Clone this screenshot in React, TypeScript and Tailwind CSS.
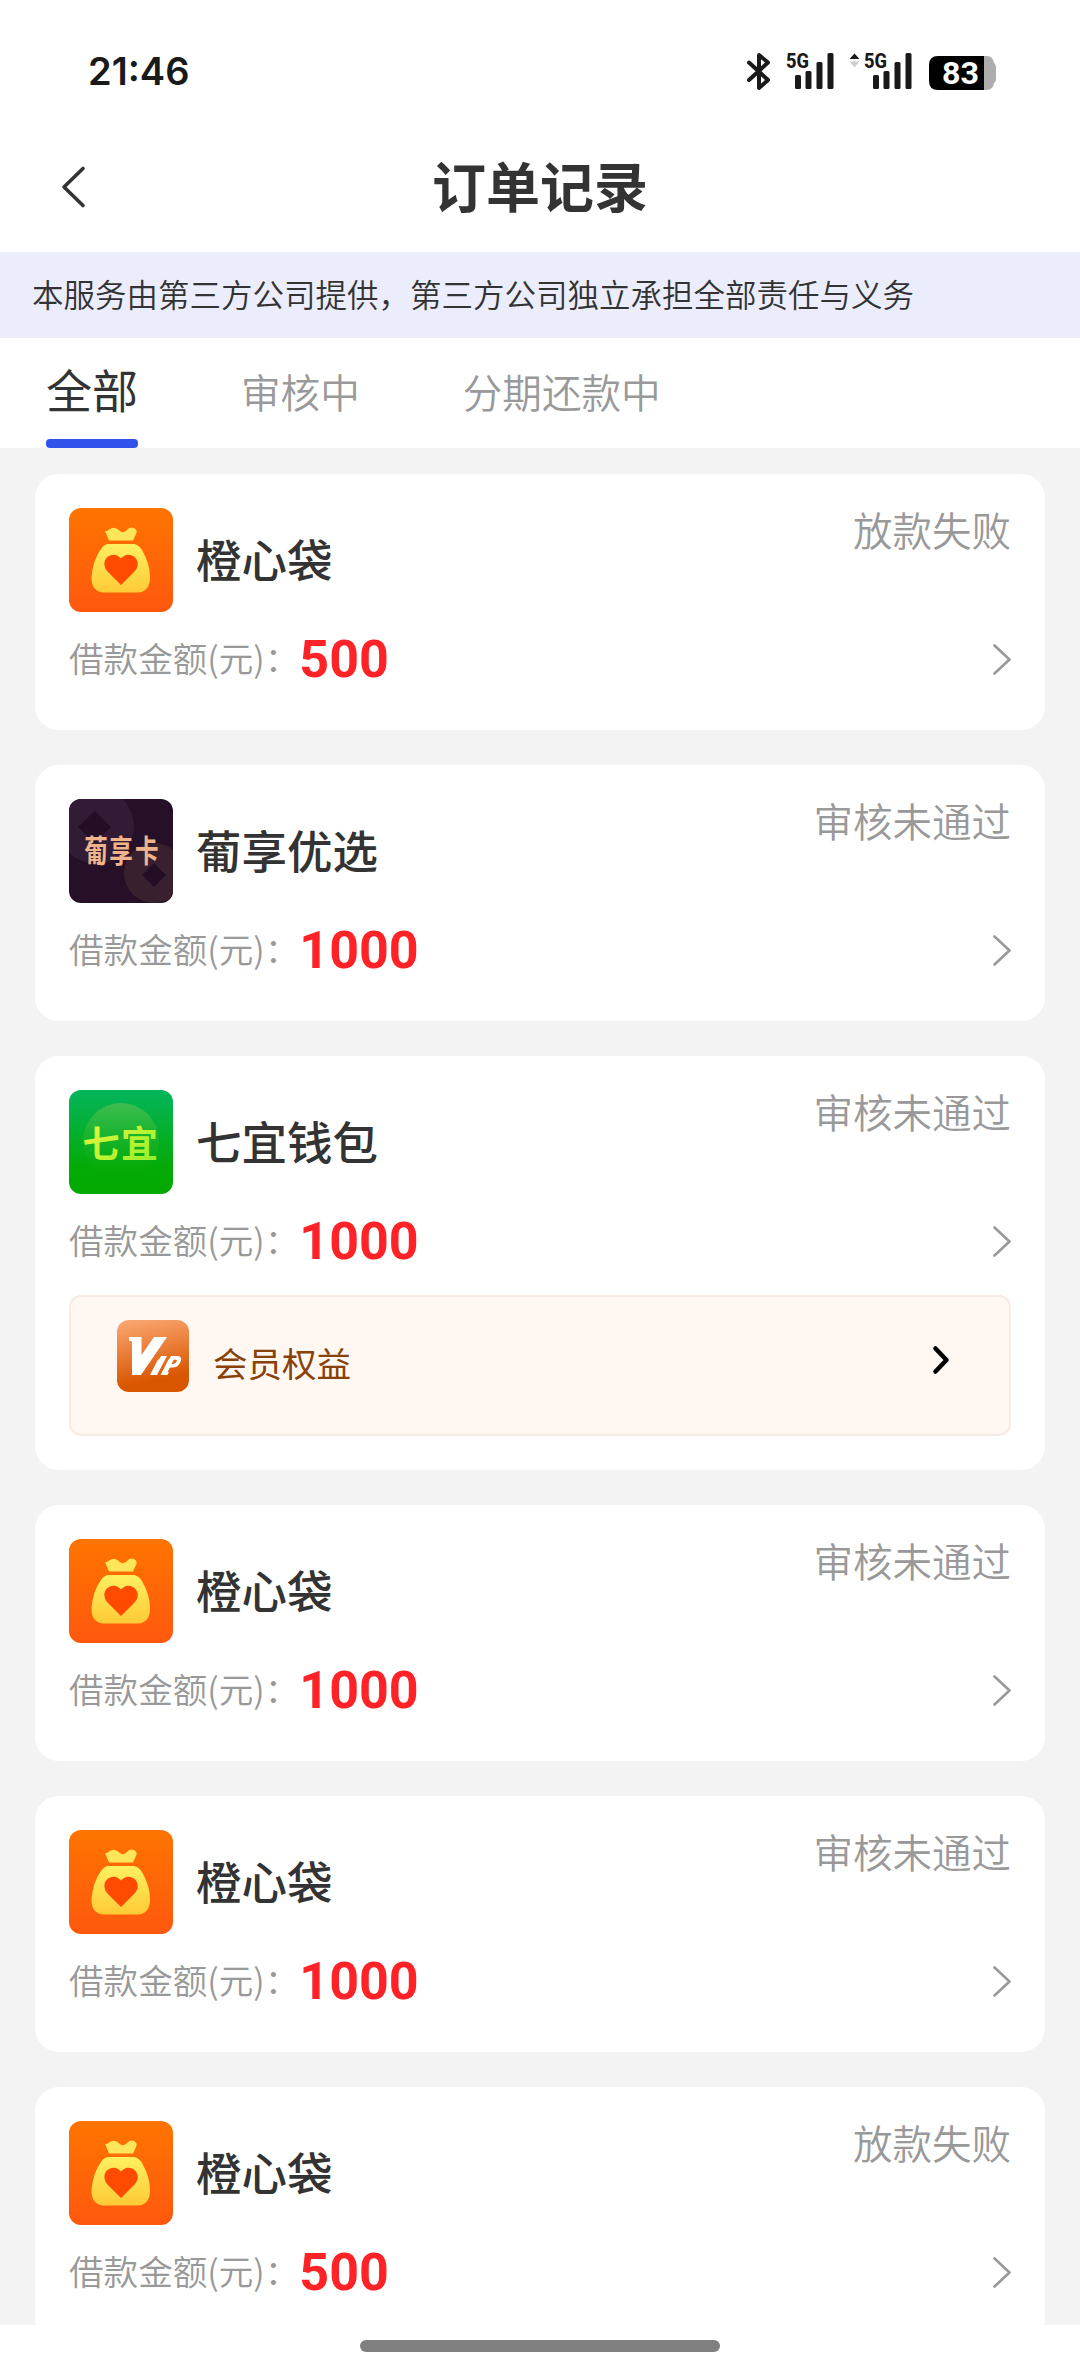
import React, { useState } from "react";

type Logo = "bag" | "grape" | "green";

interface Order {
  id: number;
  name: string;
  logo: Logo;
  status: string;
  amount: number;
  vip?: boolean;
}

const tabs = ["全部", "审核中", "分期还款中"];

const orders: Order[] = [
  { id: 1, name: "橙心袋", logo: "bag", status: "放款失败", amount: 500 },
  { id: 2, name: "葡享优选", logo: "grape", status: "审核未通过", amount: 1000 },
  { id: 3, name: "七宜钱包", logo: "green", status: "审核未通过", amount: 1000, vip: true },
  { id: 4, name: "橙心袋", logo: "bag", status: "审核未通过", amount: 1000 },
  { id: 5, name: "橙心袋", logo: "bag", status: "审核未通过", amount: 1000 },
  { id: 6, name: "橙心袋", logo: "bag", status: "放款失败", amount: 500 },
];

function Signal() {
  return (
    <svg className="overflow-visible" width="48" height="38" viewBox="0 0 48 38" fill="#1a1a1a">
      <text x="0" y="15.500" fontFamily="Roboto" fontWeight="800" fontSize="20.500" textLength="23" lengthAdjust="spacingAndGlyphs">
        5G
      </text>
      <rect x="9" y="23" width="6" height="14" rx="1.500" />
      <rect x="19.500" y="19" width="6" height="18" rx="1.500" />
      <rect x="30.500" y="10" width="6" height="27" rx="1.500" />
      <rect x="41.500" y="1" width="6" height="36" rx="1.500" />
    </svg>
  );
}

function StatusBar() {
  return (
    <div className="flex h-[136px] shrink-0 items-start justify-between pt-[52px] pr-[84px] pl-[88px]">
      <span className="font-['Inter'] text-[38px] leading-[39px] font-semibold text-[#1a1a1a]">21:46</span>
      <div className="flex">
        <svg className="mr-[15px]" width="25" height="39" viewBox="0 0 25 39" fill="none" stroke="#1a1a1a" strokeWidth="4" strokeLinecap="round" strokeLinejoin="round">
          <path d="M3 10.500L22 28L13 36V3L22 10.500L3 28" />
        </svg>
        <Signal />
        <svg className="mr-[4px] ml-[15px]" width="11" height="38" viewBox="0 0 11 38">
          <path d="M5.500 1.500L10.500 7H0.500Z" fill="#1a1a1a" />
          <path d="M0.500 9.500H10.500L5.500 15.500Z" fill="#cfcfcf" />
        </svg>
        <Signal />
        <svg className="ml-[17px]" width="67" height="40" viewBox="0 0 67 40">
          <path d="M54 4h4q6 0 7 7q2 1 2 5v10q0 4-2 5q-1 7-7 7h-4z" fill="#adadad" />
          <path d="M9 4H55V38H9Q0 38 0 29V13Q0 4 9 4Z" fill="#000" />
          <text x="13" y="32" fill="#fff" fontFamily="Roboto" fontWeight="700" fontSize="31" textLength="37" lengthAdjust="spacingAndGlyphs">
            83
          </text>
        </svg>
      </div>
    </div>
  );
}

function BagLogo() {
  return (
    <svg className="size-[104px] shrink-0 rounded-xl" viewBox="0 0 104 104">
      <defs>
        <linearGradient id="bagBg" x1="0" y1="0" x2="0" y2="1">
          <stop offset="0" stopColor="#ff7400" />
          <stop offset="1" stopColor="#ff580e" />
        </linearGradient>
        <linearGradient id="bagFill" x1="0" y1="0" x2="0" y2="1">
          <stop offset="0" stopColor="#fff060" />
          <stop offset="1" stopColor="#ffca36" />
        </linearGradient>
      </defs>
      <rect width="104" height="104" fill="url(#bagBg)" />
      <path
        d="M40 32.500L36 23Q38 23.500 40 21.500Q45 18 49 21.500Q54 26.500 58 22Q61 18.500 65 20Q69 22 67 26L64 32.500Z"
        fill="#ffe55a"
      />
      <path
        d="M39 36H65Q70 37 73 42Q81 56 81 69Q81 84 69 84.500H34Q22 83 22.500 69Q24 52 32 41Q35 36.500 39 36Z"
        fill="url(#bagFill)"
      />
      <path d="M52 77L38 63Q33 56 37 50.500Q41 46 47 47Q50 48 52 50.500Q54 48 57 47Q63 46 67 50.500Q71 57 66 63Z" fill="#ff4a00" />
    </svg>
  );
}

function GrapeLogo() {
  return (
    <svg className="size-[104px] shrink-0 rounded-xl" viewBox="0 0 104 104">
      <rect width="104" height="104" fill="#251027" />
      <circle cx="27" cy="27" r="38" fill="#321b34" />
      <circle cx="85" cy="74" r="30" fill="#38202f" />
      <path d="M26 12L42 28L26 44L9 28Z" fill="#230e26" />
      <path d="M85 64L97 76L85 88L73 76Z" fill="#230e26" />
      <text
        transform="scale(0.76 1)"
        x="20 53 87"
        y="63.500"
        fill="#f0b48c"
        fontFamily="'Noto Sans CJK SC'"
        fontWeight="700"
        fontSize="31"
      >
        葡享卡
      </text>
    </svg>
  );
}

function GreenLogo() {
  return (
    <svg className="size-[104px] shrink-0 rounded-xl" viewBox="0 0 104 104">
      <defs>
        <linearGradient id="greenBg" x1="0" y1="0" x2="0" y2="1">
          <stop offset="0" stopColor="#04b55c" />
          <stop offset="0.75" stopColor="#04aa06" />
          <stop offset="1" stopColor="#03a800" />
        </linearGradient>
        <linearGradient id="greenBall" x1="0" y1="0" x2="0" y2="1">
          <stop offset="0" stopColor="#3fbd50" />
          <stop offset="1" stopColor="#10ac08" stopOpacity="0" />
        </linearGradient>
        <linearGradient id="greenText" x1="0" y1="0" x2="1" y2="1">
          <stop offset="0" stopColor="#f4f63c" />
          <stop offset="1" stopColor="#8cf02c" />
        </linearGradient>
      </defs>
      <rect width="104" height="104" fill="url(#greenBg)" />
      <circle cx="52" cy="51" r="38" fill="url(#greenBall)" />
      <text x="13.500 52" y="68" fill="url(#greenText)" fontFamily="'Noto Sans CJK SC'" fontWeight="700" fontSize="37">
        七宜
      </text>
    </svg>
  );
}

const logos = { bag: BagLogo, grape: GrapeLogo, green: GreenLogo };

function VipPanel() {
  return (
    <div className="mt-6 flex h-[141px] items-start rounded-xl border-2 border-[#f8ebe3] bg-[#fff7f1] pt-[23px] pr-[59px] pl-[46px]">
      <svg className="size-[72px] shrink-0 rounded-xl" viewBox="0 0 72 72">
        <defs>
          <linearGradient id="vipBg" x1="0.3" y1="0" x2="0.5" y2="1">
            <stop offset="0" stopColor="#f9a46d" />
            <stop offset="0.85" stopColor="#d95600" />
          </linearGradient>
        </defs>
        <rect width="72" height="72" fill="url(#vipBg)" />
        {/* stylised VIP mark */}
        <path d="M12 17H24.500V35L37 17H50L24 55H15V21H12Z" fill="#fff" />
        <path d="M44 36H50L40 55H33L41 39.500H42Z" fill="#fff" />
        <path
          fillRule="evenodd"
          d="M54 36H60Q65 36 64 40.500Q62 47 56 47.500H53L50.500 52H52L50.500 55H43.500L51.500 39.500H52Z M57 39.500L54.500 44H56Q59 43.500 60 41Q60 39.500 57 39.500Z"
          fill="#fff"
        />
      </svg>
      <span className="mt-[15px] ml-6 text-[34.500px] leading-[55px] text-[#874109]">会员权益</span>
      <svg className="mt-[25px] ml-auto" width="18" height="30" viewBox="0 0 18 30" fill="none" stroke="#000" strokeWidth="4.500" strokeLinecap="round" strokeLinejoin="round">
        <path d="M3.500 3.500L14.500 15L3.500 26.500" />
      </svg>
    </div>
  );
}

function OrderCard({ order }: { order: Order }) {
  const LogoIcon = logos[order.logo];

  return (
    <div className="min-h-[256px] shrink-0 rounded-3xl bg-white p-[34px]">
      <div className="flex h-[104px] items-center">
        <LogoIcon />
        <h2 className="ml-[23px] pb-[5px] text-[45.500px] leading-[60px] font-medium text-[#333]">{order.name}</h2>
        <span className="ml-auto self-start text-[39.500px] leading-[42px] font-[350] text-[#999]">{order.status}</span>
      </div>
      <div className="mt-[17px] flex h-[60px] items-center">
        <span className="pb-[2px] text-[34.600px] font-[350] text-[#999]">借款金额(元)：</span>
        <span className="pt-px font-['Roboto'] text-[52px] leading-[60px] font-bold text-[#ff2226]">{order.amount}</span>
        <svg className="ml-auto" width="19" height="32" viewBox="0 0 19 32" fill="none" stroke="#999" strokeWidth="2.600" strokeLinecap="round" strokeLinejoin="round">
          <path d="M2.500 2.500L17.500 16.500L2.500 30.500" />
        </svg>
      </div>
      {order.vip && <VipPanel />}
    </div>
  );
}

export default function App() {
  const [active, setActive] = useState(0);

  return (
    <div className="flex h-[2373px] w-[1080px] flex-col overflow-hidden bg-white font-['Noto_Sans_CJK_SC',sans-serif]">
      <StatusBar />
      <header className="flex h-[116px] shrink-0 items-start px-[60px]">
        <svg className="mt-[29px]" width="26" height="44" viewBox="0 0 26 44" fill="none" stroke="#333" strokeWidth="3.600" strokeLinecap="round" strokeLinejoin="round">
          <path d="M23 3.500L4 22L23 40.500" />
        </svg>
        <h1 className="mt-[11px] mr-[26px] flex-1 text-center text-[54px] leading-[76px] font-bold text-[#333]">订单记录</h1>
      </header>
      <div className="h-[86px] shrink-0 bg-[#ebedfd] pl-8 text-[31.500px] leading-[82px] font-[350] text-[#333]">
        本服务由第三方公司提供，第三方公司独立承担全部责任与义务
      </div>
      <nav className="flex h-[110px] shrink-0 gap-[103px] pl-[46px]">
        {tabs.map((tab, i) => (
          <button
            key={tab}
            onClick={() => setActive(i)}
            className={
              i === active
                ? "flex flex-col items-center justify-between text-[46px] leading-[101px] text-[#333]"
                : "flex flex-col text-[39.600px] leading-[106px] font-[350] text-[#999]"
            }
          >
            <span className="h-[101px]">{tab}</span>
            {i === active && <span className="h-[9px] w-full rounded-[4px] bg-[#3051ea]" />}
          </button>
        ))}
      </nav>
      <main className="flex flex-1 flex-col gap-[35px] overflow-hidden bg-[#f3f3f3] px-[35px] pt-[26px]">
        {orders.map((order) => (
          <OrderCard key={order.id} order={order} />
        ))}
      </main>
      <footer className="flex h-12 shrink-0 justify-center bg-white pt-[15px]">
        <div className="h-3 w-[360px] rounded-full bg-[#808080]" />
      </footer>
    </div>
  );
}
